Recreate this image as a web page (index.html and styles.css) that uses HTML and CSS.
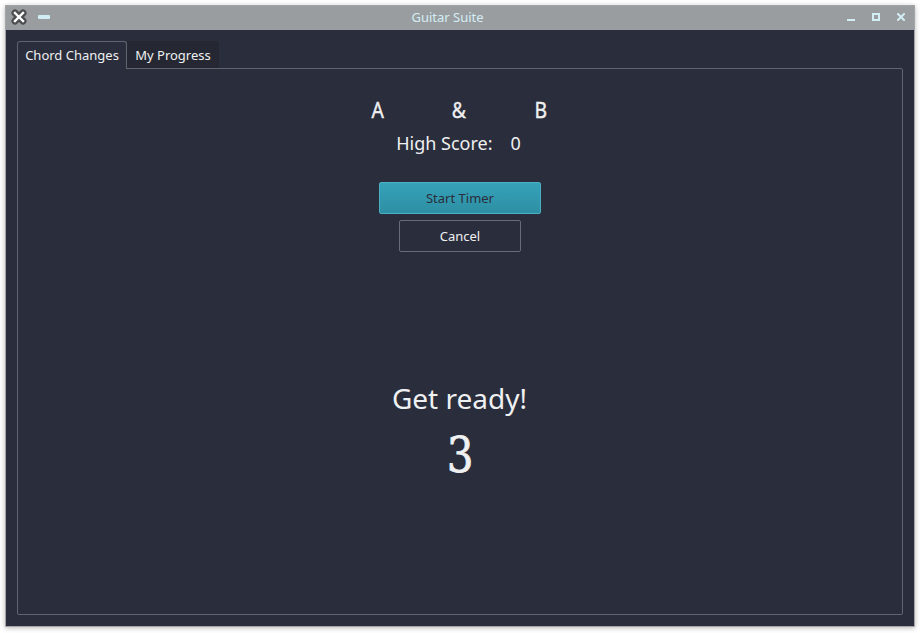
FILE: index.html
```html
<!DOCTYPE html>
<html lang="en">
<head>
<meta charset="utf-8">
<title>Guitar Suite</title>
<link rel="stylesheet" href="styles.css">
</head>
<body>
<main class="window">
  <header class="titlebar">
    <div class="left-controls">
      <svg width="16" height="16" viewBox="0 0 16 16"><path d="M4 4L12 12M12 4L4 12" stroke="#4b4d4f" stroke-width="7" stroke-linecap="round"/><path d="M4 4L12 12M12 4L4 12" stroke="#fff" stroke-width="2.4" stroke-linecap="square"/></svg>
      <span class="shade"></span>
    </div>
    <h1>Guitar Suite</h1>
    <div class="right-controls">
      <svg width="8" height="8" viewBox="0 0 8 8"><path d="M0 6H8V8H0Z" fill="#d3edf5"/></svg>
      <svg width="8" height="8" viewBox="0 0 8 8"><rect x="1" y="1" width="6" height="6" fill="none" stroke="#d3edf5" stroke-width="2"/></svg>
      <svg width="8" height="8" viewBox="0 0 8 8"><path d="M1 1L7 7M7 1L1 7" stroke="#d3edf5" stroke-width="2" stroke-linecap="square"/></svg>
    </div>
  </header>
  <nav class="tabs">
    <a class="tab active">Chord Changes</a>
    <a class="tab">My Progress</a>
  </nav>
  <section class="panel">
    <div class="chords"><span>A</span><span>&amp;</span><span>B</span></div>
    <div class="score"><span>High Score:</span><span>0</span></div>
    <button class="start">Start Timer</button>
    <button class="cancel">Cancel</button>
    <div class="ready">Get ready!</div>
    <div class="count">3</div>
  </section>
</main>
</body>
</html>
```
FILE: styles.css
```css
* { box-sizing: border-box; }
body {
  margin: 0;
  padding: 5px 5px 6px 5px;
  height: 633px;
  background: #fff;
  color: #eff0f1;
  font: 13px/18px "Noto Sans", sans-serif;
  overflow: hidden;
}
.window {
  display: flex;
  flex-direction: column;
  width: 910px;
  height: 622px;
  border: 1px solid #a3a5a9;
  background: #2a2d3b;
  box-shadow: 0 1px 5px rgba(0, 0, 0, .28);
}
.titlebar {
  display: grid;
  grid-template-columns: 120px 1fr 120px;
  align-items: center;
  height: 24px;
  padding-bottom: 2px;
  background: #999d9f;
}
.titlebar h1 {
  margin: 0;
  padding-right: 25px;
  font-size: 13px;
  font-weight: 400;
  text-align: center;
  color: #d3edf5;
}
.left-controls { display: flex; align-items: center; gap: 11px; padding-left: 5px; }
.titlebar svg { display: block; fill: none; }
.shade { width: 12px; height: 4px; border-radius: 1px; background: #d3edf5; }
.right-controls { display: flex; justify-content: flex-end; gap: 17px; padding-right: 9px; }
.tabs { display: flex; align-items: flex-end; height: 39px; padding: 11px 0 0 11px; }
.tab {
  height: 27px;
  width: 92px;
  margin-bottom: 1px;
  padding-top: 5px;
  text-align: center;
  background: #252833;
  border-radius: 0 3px 0 0;
}
.tab.active {
  position: relative;
  width: 110px;
  height: 28px;
  padding-top: 4px;
  margin-bottom: 0;
  background: #2a2d3b;
  border: 1px solid #61646f;
  border-bottom: 0;
  border-radius: 3px 3px 0 0;
}
.panel {
  display: flex;
  flex-direction: column;
  align-items: center;
  height: 547px;
  margin: -1px 11px 0;
  border: 1px solid #61646f;
  border-radius: 0 2px 2px 2px;
}
.chords { display: flex; gap: 68px; margin: 26px 2px 0 0; font-size: 22px; line-height: 28px; }
.chords span { width: 13.5px; display: flex; justify-content: center; transform: scaleX(.88); -webkit-text-stroke: .4px #eff0f1; }
.score { display: flex; gap: 18px; margin: 7px 3px 0 0; font-size: 18px; line-height: 26px; }
button { font: inherit; padding: 0 0 1px; border-radius: 2px; }
.start {
  width: 162px;
  height: 32px;
  margin-top: 26px;
  border: 1px solid #4bb0c4;
  background: linear-gradient(#35a2b9, #2e8fa3);
  color: #2a2d3b;
}
.cancel {
  width: 122px;
  height: 32px;
  margin-top: 6px;
  border: 1px solid #696c76;
  background: #2a2d3b;
  color: #eff0f1;
}
.ready { margin: 126px 1px 0 0; font-size: 28px; line-height: 40px; }
.count { margin-top: 5px; font: 48px/64px "DejaVu Serif", serif; transform: scaleX(.88); -webkit-text-stroke: .8px #eff0f1; }
```
